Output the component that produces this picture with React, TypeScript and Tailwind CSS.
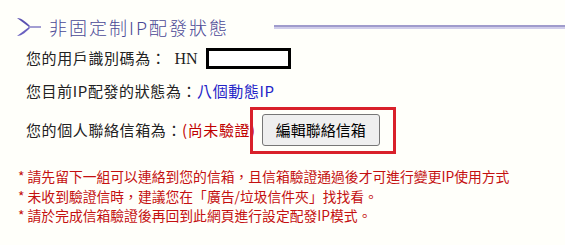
import React from 'react';

const cjk = '"Noto Sans CJK TC", "Liberation Sans", sans-serif';
const serif = '"Liberation Serif", "Noto Sans CJK TC", serif';

const Swoosh: React.FC = () => (
  <svg width="26" height="20" viewBox="0 0 26 20" className="shrink-0">
    <path d="M1 1 C6 1 11 6 14 9 L13 10 C9 7 5 4 1 1 Z" fill="#5a50b0" />
    <path d="M1 19 C6 19 11 14 14 11 L13 10 C9 13 5 16 1 19 Z" fill="#6a60c0" />
    <path d="M12 9.2 H25 V10.8 H12 Z" fill="#8c86c8" />
  </svg>
);

const notes = [
  '* 請先留下一組可以連絡到您的信箱，且信箱驗證通過後才可進行變更IP使用方式',
  '* 未收到驗證信時，建議您在「廣告/垃圾信件夾」找找看。',
  '* 請於完成信箱驗證後再回到此網頁進行設定配發IP模式。',
];

export default function App() {
  return (
    <div className="w-full h-[245px] bg-[#fffffa] overflow-hidden" style={{ fontFamily: cjk }}>
      <div className="flex items-center pt-[15px] pl-[16px] h-[39px]">
        <Swoosh />
        <span className="ml-[7px] text-[18px] tracking-[2px] text-[#4a4896] leading-none" style={{ fontFamily: '"Noto Sans CJK TC", serif', fontWeight: 300 }}>
          非固定制IP配發狀態
        </span>
        <div className="ml-[45px] flex-1 flex flex-col">
          <div className="h-[2px] bg-[#a09ccc]" />
          <div className="h-[2px] bg-[#d0cdea]" />
        </div>
      </div>

      <div className="pl-[26px] text-[15px] text-[#222] tracking-[0.6px]">
        <div className="flex items-center h-[21px] mt-[9px]">
          <span>您的用戶識別碼為：</span>
          <span className="ml-[8px] tracking-normal" style={{ fontFamily: serif, fontSize: 16 }}>HN</span>
          <div className="ml-[8px] w-[85px] h-[21px] border-[3px] border-black bg-white" />
        </div>
        <div className="flex items-center h-[20px] mt-[12px]">
          <span>您目前IP配發的狀態為：</span>
          <span className="text-[#2424c8]">八個動態IP</span>
        </div>
        <div className="flex items-center h-[32px] mt-[13px]">
          <span>您的個人聯絡信箱為：</span>
          <span className="text-[#c00000]">(尚未驗證)</span>
          <div className="relative ml-[6px]">
            <button className="h-[32px] px-[13px] bg-[#efefef] border border-[#767676] rounded-[3px] text-[15px] text-black tracking-normal">
              編輯聯絡信箱
            </button>
            <div className="absolute -left-[12px] -right-[16px] -top-[7px] -bottom-[8px] border-[3px] border-[#d9202a] pointer-events-none" />
          </div>
        </div>
      </div>

      <div className="pl-[18px] mt-[21px] text-[13.8px] text-[#c41010] leading-[19.5px]">
        {notes.map((n, i) => (
          <div key={i} className="whitespace-nowrap">{n}</div>
        ))}
      </div>
    </div>
  );
}
